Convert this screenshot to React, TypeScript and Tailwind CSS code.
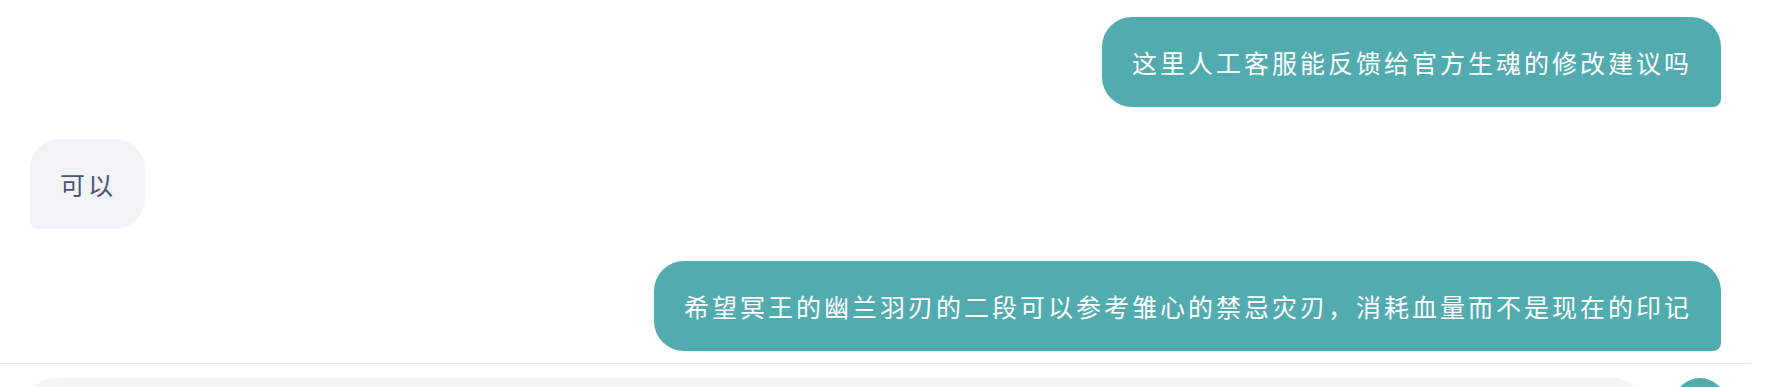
import React from "react";

const font = { fontFamily: '"Noto Sans CJK SC", "Noto Sans", sans-serif' };

function UserBubble({ text }: { text: string }) {
  return (
    <div className="flex justify-end">
      <div className="bg-[#52abaf] text-white text-[25px] leading-[30px] tracking-[3px] pl-[30px] pr-[29px] py-[30px] rounded-tl-[30px] rounded-tr-[30px] rounded-bl-[30px] rounded-br-[8px] whitespace-nowrap">
        {text}
      </div>
    </div>
  );
}

function AgentBubble({ text }: { text: string }) {
  return (
    <div className="flex justify-start">
      <div className="bg-[#f2f3f6] text-[#4b5372] text-[25px] leading-[30px] tracking-[3px] pl-[30px] pr-[29px] py-[30px] rounded-tl-[30px] rounded-tr-[30px] rounded-br-[30px] rounded-bl-[8px] whitespace-nowrap">
        {text}
      </div>
    </div>
  );
}

export default function App() {
  return (
    <div className="w-full min-h-screen bg-white flex" style={font}>
      <div className="flex-1 flex flex-col">
        <div className="flex flex-col gap-[32px] pl-[30px] pr-[30px] pt-[17px] pb-[12px]">
          <UserBubble text="这里人工客服能反馈给官方生魂的修改建议吗" />
          <AgentBubble text="可以" />
          <UserBubble text="希望冥王的幽兰羽刃的二段可以参考雏心的禁忌灾刃，消耗血量而不是现在的印记" />
        </div>
        <div className="border-t border-[#e8e9ec] flex items-start gap-[34px] pl-[28px] pr-[25px] pt-[14px]">
          <div className="flex-1 h-[52px] rounded-full bg-[#f3f4f6]"></div>
          <button className="w-[52px] h-[52px] rounded-full bg-[#52abaf] shrink-0"></button>
        </div>
      </div>
      <div className="w-[41px] shrink-0"></div>
    </div>
  );
}
